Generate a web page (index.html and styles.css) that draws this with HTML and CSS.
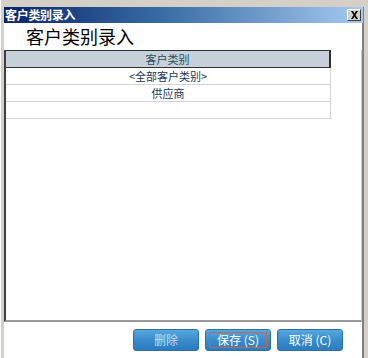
FILE: index.html
```html
<!DOCTYPE html>
<html lang="zh">
<head>
<meta charset="utf-8">
<title>客户类别录入</title>
<link rel="stylesheet" href="styles.css">
</head>
<body>
<div class="frame">
  <div class="titlebar">
    <span class="title-text">客户类别录入</span>
    <span class="close-btn"><svg width="9" height="8" viewBox="0 0 9 8"><path d="M1 0h2l1.5 2.5L6 0h2L5.5 4 8 8H6L4.5 5.5 3 8H1l2.5-4z" fill="#000"/></svg></span>
  </div>
  <div class="client">
    <div class="heading">客户类别录入</div>
    <div class="grid">
      <div class="table">
        <div class="th">客户类别</div>
        <div class="td">&lt;全部客户类别&gt;</div>
        <div class="td">供应商</div>
        <div class="td"></div>
      </div>
    </div>
    <div class="actions">
      <button class="btn btn-disabled">删除</button>
      <button class="btn btn-focus"><span class="focus-ring">保存 (S)</span></button>
      <button class="btn">取消 (C)</button>
    </div>
  </div>
</div>
</body>
</html>
```

FILE: styles.css
```css
html, body {
  margin: 0;
  padding: 0;
  background: #d4d0c8;
}
body {
  font-family: "Noto Sans CJK SC", "Liberation Sans", sans-serif;
  font-size: 12px;
}
.frame {
  width: 368px;
  height: 358px;
  box-sizing: border-box;
  padding: 7px 4px 0 3px;
  background: #d4d0c8;
  border-left: 1px solid #ffffff;
  display: flex;
  flex-direction: column;
  overflow: hidden;
}
.titlebar {
  height: 16px;
  flex: none;
  background: linear-gradient(to right, #0a246a 0%, #3a6ea5 45%, #a6caf0 100%);
  display: flex;
  align-items: center;
  justify-content: space-between;
  padding: 0 2px 0 1px;
  border-right: 1px solid #808080;
}
.title-text {
  color: #ffffff;
  font-weight: 700;
  font-size: 12px;
  line-height: 16px;
  letter-spacing: -0.3px;
}
.close-btn {
  width: 14px;
  height: 12px;
  box-sizing: border-box;
  background: #d4d0c8;
  border-top: 1px solid #ffffff;
  border-left: 1px solid #ffffff;
  border-right: 1px solid #404040;
  border-bottom: 1px solid #404040;
  display: flex;
  align-items: center;
  justify-content: center;
}
.client {
  flex: 1;
  background: #ffffff;
  display: flex;
  flex-direction: column;
  border-right: 2px solid #808080;
}
.heading {
  height: 27px;
  flex: none;
  padding-left: 22px;
  font-size: 18px;
  line-height: 26px;
  color: #000000;
}
.grid {
  height: 272px;
  flex: none;
  box-sizing: border-box;
  border-left: 2px solid #404040;
  border-bottom: 2px solid #9a9a9a;
  border-right: 1px solid #d4d0c8;
  background: #ffffff;
}
.table {
  width: 325px;
}
.th {
  height: 18px;
  box-sizing: border-box;
  background: #c8d0d9;
  border-top: 1px solid #303030;
  border-right: 2px solid #303030;
  border-bottom: 1px solid #303030;
  text-align: center;
  font-size: 11px;
  line-height: 16px;
  color: #1f5060;
}
.td {
  height: 17px;
  box-sizing: border-box;
  border-bottom: 1px solid #d4d4d4;
  border-right: 1px solid #d4d4d4;
  text-align: center;
  font-size: 11px;
  line-height: 16px;
  color: #17365d;
}
.actions {
  flex: 1;
  display: flex;
  justify-content: flex-end;
  align-items: flex-start;
  gap: 6px;
  padding: 7px 19px 0 0;
}
.btn {
  width: 66px;
  height: 22px;
  box-sizing: border-box;
  border: 1px solid #2c6ea6;
  border-radius: 3px;
  background: linear-gradient(to bottom, #56a8de 0%, #3a8ccd 50%, #2a7cbf 100%);
  color: #ffffff;
  font-family: "Noto Sans CJK SC", "Liberation Sans", sans-serif;
  font-size: 12px;
  line-height: 18px;
  padding: 0;
  display: flex;
  align-items: center;
  justify-content: center;
}
.btn-disabled {
  color: #cfdbe6;
}
.focus-ring {
  display: flex;
  align-items: center;
  justify-content: center;
  width: 56px;
  height: 14px;
  border: 1px solid #c8644a;
}
```
